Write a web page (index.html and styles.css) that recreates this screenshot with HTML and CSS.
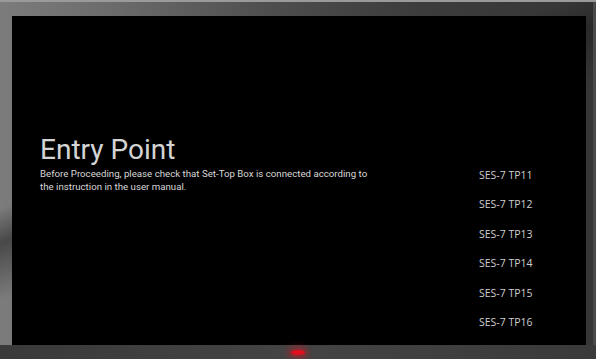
FILE: index.html
```html
<!DOCTYPE html>
<html lang="en">
<head>
    <meta charset="UTF-8">
    <meta name="viewport" content="width=device-width, initial-scale=1.0">
    <title>Entry Point</title>
    <link rel="stylesheet" href="styles.css">
</head>
<body>

    <div class="tv">
        <div class="screen">
            <div class="intro">
                <h1>Entry Point</h1>
                <p>Before Proceeding, please check that Set-Top Box is connected according to the instruction in the user manual.</p>
            </div>
            <ul class="channels">
                <li>SES-7 TP11</li>
                <li>SES-7 TP12</li>
                <li>SES-7 TP13</li>
                <li>SES-7 TP14</li>
                <li>SES-7 TP15</li>
                <li>SES-7 TP16</li>
            </ul>
        </div>
        <div class="chin">
            <span class="led"></span>
        </div>
    </div>

</body>
</html>
```

FILE: styles.css
```css
body {
    margin: 0;
    background: #fff;
    font-family: Roboto, "Liberation Sans", sans-serif;
}
.tv {
    width: 596px;
    height: 359px;
    box-sizing: border-box;
    padding: 14px 10px 0 12px;
    display: flex;
    flex-direction: column;
    border-top: 2px solid #9a9a9a;
    background:
        linear-gradient(160deg, transparent 0, transparent 36%, rgba(30,30,30,0.55) 42%, transparent 52%),
        linear-gradient(to right, #7c7c7c 0, #6a6a6a 20%, #4e4e4e 45%, #3c3c3c 70%, #363636 100%);
    box-shadow: inset -3px 0 0 #4a4a4a;
}
.screen {
    height: 329px;
    background: #000;
    display: flex;
    justify-content: space-between;
    color: #d2d2d2;
}
.intro {
    padding: 118px 0 0 28px;
    width: 340px;
}
h1 {
    margin: 0;
    font-size: 28px;
    font-weight: 400;
    line-height: 31px;
    color: #d4d4d4;
}
p {
    margin: 3px 0 0;
    max-width: 332px;
    font-size: 9.7px;
    line-height: 12.5px;
    color: #d8d8d8;
}
.channels {
    list-style: none;
    margin: 0;
    padding: 151px 0 0;
    width: 107px;
    font-family: "Open Sans", sans-serif;
    font-size: 10.5px;
    color: #cfcfcf;
}
.channels li {
    height: 29.4px;
    line-height: 16px;
}
.chin {
    flex: 1;
    display: flex;
    justify-content: center;
    align-items: center;
    background: linear-gradient(to right, #3a3a3a, #444 50%, #3a3a3a);
    margin: 0 -10px 0 -12px;
}
.led {
    width: 14px;
    height: 5px;
    border-radius: 50%;
    background: #e01020;
    box-shadow: 0 0 6px 3px rgba(220, 20, 30, 0.6);
}
```
